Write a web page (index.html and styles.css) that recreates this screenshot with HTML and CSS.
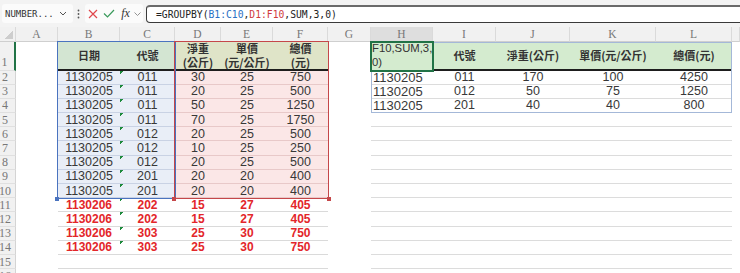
FILE: index.html
```html
<!DOCTYPE html>
<html lang="zh-Hant">
<head>
<meta charset="utf-8">
<title>GROUPBY</title>
<link rel="stylesheet" href="styles.css">
</head>
<body>
<div class="fbar">
  <div class="namebox"><span>NUMBER...</span><svg width="8" height="5" viewBox="0 0 8 5"><path d="M1 1l3 3 3-3" fill="none" stroke="#555" stroke-width="1"/></svg></div>
  <div class="more"><svg width="3" height="10" viewBox="0 0 3 10"><circle cx="1.5" cy="1.5" r="0.9"/><circle cx="1.5" cy="5" r="0.9"/><circle cx="1.5" cy="8.5" r="0.9"/></svg></div>
  <div class="tools">
    <span class="tool"><svg width="10" height="10" viewBox="0 0 10 10"><path d="M1 1L9 9M9 1L1 9" stroke="#e0474c" stroke-width="1.2"/></svg></span>
    <span class="tool"><svg width="12" height="9" viewBox="0 0 12 9"><path d="M1 4.5L4.5 8L11 1" fill="none" stroke="#3a9a5b" stroke-width="1.2"/></svg></span>
    <span class="tool fx">fx</span>
    <span class="tool dd"><svg width="7" height="4" viewBox="0 0 7 4"><path d="M0.5 0.5l3 3 3-3" fill="none" stroke="#888" stroke-width="0.9"/></svg></span>
  </div>
  <div class="formula">=GROUPBY(<span class="rb">B1:C10</span>,<span class="rr">D1:F10</span>,SUM,3,0)</div>
</div>
<div class="sheet">
  <div class="cells">
    <div class="ch corner"></div><div class="ch">A</div><div class="ch">B</div><div class="ch">C</div><div class="ch">D</div><div class="ch">E</div><div class="ch">F</div><div class="ch">G</div><div class="ch sel">H</div><div class="ch">I</div><div class="ch">J</div><div class="ch">K</div><div class="ch">L</div><div class="ch"></div>

    <div class="rh r1 sel">1</div><div></div><div class="hd hg1">日期</div><div class="hd hg1">代號</div><div class="hd hg2">淨重<br>(公斤)</div><div class="hd hg2">單價<br>(元/公斤)</div><div class="hd hg2">總價<br>(元)</div><div></div><div class="hh">F10,SUM,3,<br>0)</div><div class="hd hg3">代號</div><div class="hd hg3">淨重(公斤)</div><div class="hd hg3">單價(元/公斤)</div><div class="hd hg3">總價(元)</div><div></div>

    <div class="rh">2</div><div></div><div class="lb">1130205</div><div class="lb tri">011</div><div class="lr">30</div><div class="lr">25</div><div class="lr">750</div><div></div><div class="rt tl">1130205</div><div class="rt">011</div><div class="rt">170</div><div class="rt">100</div><div class="rt">4250</div><div></div>

    <div class="rh">3</div><div></div><div class="lb">1130205</div><div class="lb tri">011</div><div class="lr">20</div><div class="lr">25</div><div class="lr">500</div><div></div><div class="rt tl">1130205</div><div class="rt">012</div><div class="rt">50</div><div class="rt">75</div><div class="rt">1250</div><div></div>

    <div class="rh">4</div><div></div><div class="lb">1130205</div><div class="lb tri">011</div><div class="lr">50</div><div class="lr">25</div><div class="lr">1250</div><div></div><div class="rt tl">1130205</div><div class="rt">201</div><div class="rt">40</div><div class="rt">40</div><div class="rt">800</div><div></div>

    <div class="rh">5</div><div></div><div class="lb">1130205</div><div class="lb tri">011</div><div class="lr">70</div><div class="lr">25</div><div class="lr">1750</div><div></div><div class="rg"></div><div class="rg"></div><div class="rg"></div><div class="rg"></div><div class="rg"></div><div></div>

    <div class="rh">6</div><div></div><div class="lb">1130205</div><div class="lb tri">012</div><div class="lr">20</div><div class="lr">25</div><div class="lr">500</div><div></div><div class="rg"></div><div class="rg"></div><div class="rg"></div><div class="rg"></div><div class="rg"></div><div></div>

    <div class="rh">7</div><div></div><div class="lb">1130205</div><div class="lb tri">012</div><div class="lr">10</div><div class="lr">25</div><div class="lr">250</div><div></div><div class="rg"></div><div class="rg"></div><div class="rg"></div><div class="rg"></div><div class="rg"></div><div></div>

    <div class="rh">8</div><div></div><div class="lb">1130205</div><div class="lb tri">012</div><div class="lr">20</div><div class="lr">25</div><div class="lr">500</div><div></div><div class="rg"></div><div class="rg"></div><div class="rg"></div><div class="rg"></div><div class="rg"></div><div></div>

    <div class="rh">9</div><div></div><div class="lb">1130205</div><div class="lb tri">201</div><div class="lr">20</div><div class="lr">20</div><div class="lr">400</div><div></div><div class="rg"></div><div class="rg"></div><div class="rg"></div><div class="rg"></div><div class="rg"></div><div></div>

    <div class="rh">10</div><div></div><div class="lb">1130205</div><div class="lb tri">201</div><div class="lr">20</div><div class="lr">20</div><div class="lr">400</div><div></div><div class="rg"></div><div class="rg"></div><div class="rg"></div><div class="rg"></div><div class="rg"></div><div></div>

    <div class="rh">11</div><div></div><div class="lg red">1130206</div><div class="lg red tri">202</div><div class="lg red">15</div><div class="lg red">27</div><div class="lg red">405</div><div></div><div class="rg"></div><div class="rg"></div><div class="rg"></div><div class="rg"></div><div class="rg"></div><div></div>

    <div class="rh">12</div><div></div><div class="lg red">1130206</div><div class="lg red tri">202</div><div class="lg red">15</div><div class="lg red">27</div><div class="lg red">405</div><div></div><div class="rg"></div><div class="rg"></div><div class="rg"></div><div class="rg"></div><div class="rg"></div><div></div>

    <div class="rh">13</div><div></div><div class="lg red">1130206</div><div class="lg red tri">303</div><div class="lg red">25</div><div class="lg red">30</div><div class="lg red">750</div><div></div><div class="rg"></div><div class="rg"></div><div class="rg"></div><div class="rg"></div><div class="rg"></div><div></div>

    <div class="rh">14</div><div></div><div class="lg red">1130206</div><div class="lg red tri">303</div><div class="lg red">25</div><div class="lg red">30</div><div class="lg red">750</div><div></div><div class="rg"></div><div class="rg"></div><div class="rg"></div><div class="rg"></div><div class="rg"></div><div></div>

    <div class="rh">15</div><div></div><div class="lg"></div><div class="lg"></div><div class="lg"></div><div class="lg"></div><div class="lg"></div><div></div><div class="rg"></div><div class="rg"></div><div class="rg"></div><div class="rg"></div><div class="rg"></div><div></div>

    <div class="rh">16</div><div></div><div class="lg"></div><div class="lg"></div><div class="lg"></div><div class="lg"></div><div class="lg"></div><div></div><div class="rg"></div><div class="rg"></div><div class="rg"></div><div class="rg"></div><div class="rg"></div><div></div>
  </div>
  <div class="marks">
    <div class="mk blue"></div>
    <div class="mk redr"></div>
    <div class="mk spill"></div>
    <div class="mk act"></div>
  </div>
</div>
</body>
</html>
```

FILE: styles.css
```css
* { box-sizing: border-box; margin: 0; padding: 0; }
html, body { width: 740px; height: 273px; overflow: hidden; background: #fff; }
body { font-family: "Liberation Sans", Arial, sans-serif; color: #333; }

/* formula bar */
.fbar { height: 27px; display: flex; align-items: center; background: #f3f3f3; padding-left: 2px; }
.namebox { width: 71px; height: 19px; display: flex; align-items: center; justify-content: space-between; padding: 0 6px 0 3px; font: 9px "DejaVu Sans Mono", monospace; color: #333; background: #fbfbfb; border-radius: 3px; }
.more { width: 10px; display: flex; justify-content: center; fill: #555; }
.tools { margin-left: 2px; width: 58px; height: 19px; display: flex; align-items: center; background: #fbfbfb; border-radius: 3px; }
.tool { width: 16px; display: flex; justify-content: center; align-items: center; }
.tool.fx { width: 17px; font: italic 12px "Liberation Serif", serif; color: #333; }
.tool.dd { width: 7px; }
.formula { margin-left: 3px; flex: 1; margin-right: -8px; height: 18px; background: #fff; border: 1.5px solid #3a3a3a; border-top: 2px solid #6a6a6a; border-radius: 4px 0 0 4px; display: flex; align-items: center; padding-left: 9px; font: 9.7px "DejaVu Sans Mono", monospace; color: #222; white-space: pre; }
.rb { color: #2a6fc4; }
.rr { color: #d03a3c; }

/* sheet */
.sheet { display: grid; }
.cells, .marks {
  grid-area: 1 / 1;
  display: grid;
  grid-template-columns: 16px 42px 62px 55px 46px 52px 55px 43px 62px 63px 74px 86px 76px 8px;
  grid-template-rows: 15px 28.5px repeat(15, 14.2px);
}
.marks { pointer-events: none; }
.cells > div { display: flex; align-items: center; justify-content: center; white-space: nowrap; font-size: 12.5px; line-height: 13px; padding-top: 1px; color: #383838; }

.cells > .ch { background: #f1f1f1; border-right: 1px solid #dadada; border-bottom: 1px solid #cfcfcf; font: 11.5px "Liberation Serif", serif; color: #777; align-items: center; padding: 0; line-height: 13px; }
.cells > .ch.sel { background: #dedede; }
.cells > .corner { background-color: #f1f1f1; background-image: linear-gradient(135deg, transparent 50%, #cdcdcd 50%); background-size: 9px 9px; background-position: right 2px bottom 2px; background-repeat: no-repeat; }

.cells > .rh { background: #f1f1f1; border-right: 1px solid #d4d4d4; border-bottom: 1px solid #e0e0e0; font: 12px "Liberation Serif", serif; color: #777; padding: 1px 5px 0 0; line-height: 13px; }
.cells > .r1 { align-items: flex-end; padding-bottom: 1px; }
.cells > .rh.sel { border-right: 2px solid #217346; }

.cells > .hd { font-family: "Noto Sans CJK TC", "Noto Sans CJK SC", sans-serif; font-weight: 700; font-size: 11px; line-height: 14px; color: #333; align-items: center; text-align: center; white-space: normal; padding: 0; }
.hg1 { background: #d3e5d2; border-bottom: 2px solid #1e1e1e; }
.hg2 { background: #dfe4c8; border-bottom: 2px solid #1e1e1e; }
.hg3 { background: #d4ebcf; border-bottom: 2px solid #1e1e1e; }
.cells > .hh { background: #d4ebcf; font-size: 11.3px; line-height: 13.5px; justify-content: flex-start; align-items: flex-start; white-space: normal; padding: 0 0 0 1px; color: #333; }

.lb { background-color: #e9eef7; border-bottom: 1px solid #c9d2e4; }
.lr { background-color: #fbe7e7; border-bottom: 1px solid #e8c9c9; }
.lg { border-bottom: 1px solid #dadada; }
.cells > .red { color: #e3262a; font-weight: 700; font-size: 12px; }
.tri { background-image: linear-gradient(135deg, #1d8a3c 2.6px, transparent 2.6px); background-size: 6px 6px; background-repeat: no-repeat; }

.cells > .rt { border-bottom: 1px solid #dcdcdc; font-size: 12.5px; }
.cells > .tl { justify-content: flex-start; padding-left: 2px; font-size: 13px; }
.rg { border-bottom: 1px solid #dcdcdc; }

/* range marks */
.mk { position: relative; }
.blue { grid-column: 3 / 5; grid-row: 2 / 12; border: 1.5px solid #4a73bf; margin: -1px; }
.redr { grid-column: 5 / 8; grid-row: 2 / 12; border: 1.5px solid #c5474a; margin: -1px; }
.spill { grid-column: 9 / 14; grid-row: 2 / 6; border: 1px solid #a4b8d8; }
.act { grid-column: 9 / 10; grid-row: 2 / 3; border: 2px solid #217346; margin: -1px; }
.blue::after, .redr::after, .redr::before { content: ""; position: absolute; width: 4px; height: 4px; bottom: -3px; }
.blue::after { left: -3px; background: #4a73bf; }
.redr::before { left: -3px; background: #c5474a; }
.redr::after { right: -3px; background: #c5474a; }
```
